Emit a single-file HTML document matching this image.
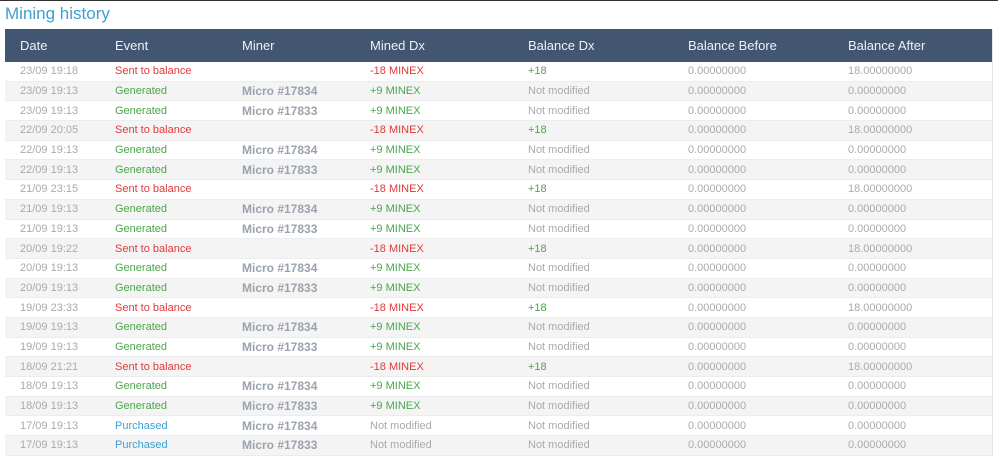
<!DOCTYPE html><html><head><style>
body{margin:0;width:998px;height:465px;background:#fff;font-family:"Liberation Sans",sans-serif;position:relative;overflow:hidden}
.t{position:absolute;left:5px;top:4px;font-size:17px;color:#3d9fd3}
.top{position:absolute;left:0;top:0;width:998px;height:1px;background:#333}
table{position:absolute;left:5px;top:29px;width:988px;border-collapse:collapse;table-layout:fixed;border-right:1px solid #e4e4e4}
th{background:#435671;color:#eef2f6;font-weight:normal;font-size:13px;text-align:left;height:33px;padding:0}
td{font-size:11px;height:18.7px;line-height:12px;padding:0;color:#aaa;border-bottom:1px solid #ececec;white-space:nowrap}
tr:nth-child(odd) td{background:#f4f4f4}
td:first-child,th:first-child{padding-left:15px}
.r{color:#e03a3a}.g{color:#4aa64a}.b{color:#3aa0d8}.m{color:#9aa3ad;font-weight:bold;font-size:12px}
</style></head><body><div class="top"></div>
<div class="t">Mining history</div>
<table>
<colgroup><col style="width:110px"><col style="width:127px"><col style="width:128px"><col style="width:158px"><col style="width:160px"><col style="width:160px"><col></colgroup>
<tr><th>Date</th><th>Event</th><th>Miner</th><th>Mined Dx</th><th>Balance Dx</th><th>Balance Before</th><th>Balance After</th></tr>
<tr><td>23/09 19:18</td><td class="r">Sent to balance</td><td></td><td class="r">-18 MINEX</td><td class="g">+18</td><td>0.00000000</td><td>18.00000000</td></tr>
<tr><td>23/09 19:13</td><td class="g">Generated</td><td class="m">Micro #17834</td><td class="g">+9 MINEX</td><td>Not modified</td><td>0.00000000</td><td>0.00000000</td></tr>
<tr><td>23/09 19:13</td><td class="g">Generated</td><td class="m">Micro #17833</td><td class="g">+9 MINEX</td><td>Not modified</td><td>0.00000000</td><td>0.00000000</td></tr>
<tr><td>22/09 20:05</td><td class="r">Sent to balance</td><td></td><td class="r">-18 MINEX</td><td class="g">+18</td><td>0.00000000</td><td>18.00000000</td></tr>
<tr><td>22/09 19:13</td><td class="g">Generated</td><td class="m">Micro #17834</td><td class="g">+9 MINEX</td><td>Not modified</td><td>0.00000000</td><td>0.00000000</td></tr>
<tr><td>22/09 19:13</td><td class="g">Generated</td><td class="m">Micro #17833</td><td class="g">+9 MINEX</td><td>Not modified</td><td>0.00000000</td><td>0.00000000</td></tr>
<tr><td>21/09 23:15</td><td class="r">Sent to balance</td><td></td><td class="r">-18 MINEX</td><td class="g">+18</td><td>0.00000000</td><td>18.00000000</td></tr>
<tr><td>21/09 19:13</td><td class="g">Generated</td><td class="m">Micro #17834</td><td class="g">+9 MINEX</td><td>Not modified</td><td>0.00000000</td><td>0.00000000</td></tr>
<tr><td>21/09 19:13</td><td class="g">Generated</td><td class="m">Micro #17833</td><td class="g">+9 MINEX</td><td>Not modified</td><td>0.00000000</td><td>0.00000000</td></tr>
<tr><td>20/09 19:22</td><td class="r">Sent to balance</td><td></td><td class="r">-18 MINEX</td><td class="g">+18</td><td>0.00000000</td><td>18.00000000</td></tr>
<tr><td>20/09 19:13</td><td class="g">Generated</td><td class="m">Micro #17834</td><td class="g">+9 MINEX</td><td>Not modified</td><td>0.00000000</td><td>0.00000000</td></tr>
<tr><td>20/09 19:13</td><td class="g">Generated</td><td class="m">Micro #17833</td><td class="g">+9 MINEX</td><td>Not modified</td><td>0.00000000</td><td>0.00000000</td></tr>
<tr><td>19/09 23:33</td><td class="r">Sent to balance</td><td></td><td class="r">-18 MINEX</td><td class="g">+18</td><td>0.00000000</td><td>18.00000000</td></tr>
<tr><td>19/09 19:13</td><td class="g">Generated</td><td class="m">Micro #17834</td><td class="g">+9 MINEX</td><td>Not modified</td><td>0.00000000</td><td>0.00000000</td></tr>
<tr><td>19/09 19:13</td><td class="g">Generated</td><td class="m">Micro #17833</td><td class="g">+9 MINEX</td><td>Not modified</td><td>0.00000000</td><td>0.00000000</td></tr>
<tr><td>18/09 21:21</td><td class="r">Sent to balance</td><td></td><td class="r">-18 MINEX</td><td class="g">+18</td><td>0.00000000</td><td>18.00000000</td></tr>
<tr><td>18/09 19:13</td><td class="g">Generated</td><td class="m">Micro #17834</td><td class="g">+9 MINEX</td><td>Not modified</td><td>0.00000000</td><td>0.00000000</td></tr>
<tr><td>18/09 19:13</td><td class="g">Generated</td><td class="m">Micro #17833</td><td class="g">+9 MINEX</td><td>Not modified</td><td>0.00000000</td><td>0.00000000</td></tr>
<tr><td>17/09 19:13</td><td class="b">Purchased</td><td class="m">Micro #17834</td><td>Not modified</td><td>Not modified</td><td>0.00000000</td><td>0.00000000</td></tr>
<tr><td>17/09 19:13</td><td class="b">Purchased</td><td class="m">Micro #17833</td><td>Not modified</td><td>Not modified</td><td>0.00000000</td><td>0.00000000</td></tr>
</table></body></html>
